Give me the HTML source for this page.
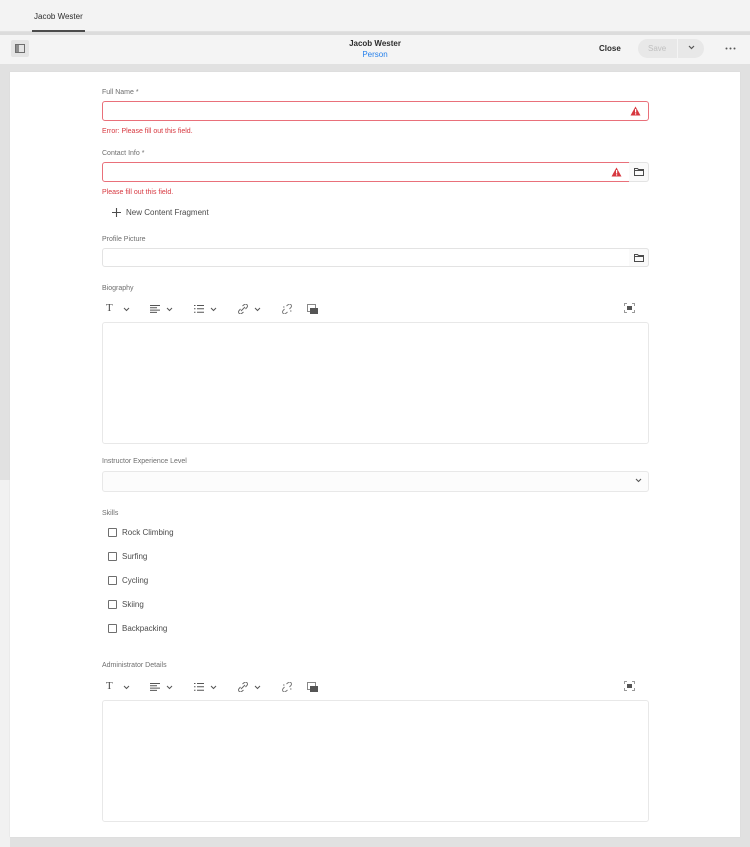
<!DOCTYPE html>
<html><head><meta charset="utf-8"><style>
*{margin:0;padding:0;box-sizing:border-box}
body{width:750px;height:847px;overflow:hidden;background:#e1e1e1;font-family:"Liberation Sans",sans-serif;position:relative;color:#4b4b4b}
.a{position:absolute}
.lbl{position:absolute;left:102px;font-size:7px;color:#6e6e6e}
.inp{position:absolute;left:102px;width:547px;height:20px;border:1px solid #e3e3e3;border-radius:3px;background:#fff}
.err{border-color:#e9707a}
.etxt{position:absolute;left:102px;font-size:7px;color:#d7373f}
.fold{position:absolute;left:629px;width:20px;height:20px;border:1px solid #e3e3e3;border-left:none;border-radius:0 3px 3px 0;background:#fafafa}
.cb{position:absolute;left:108px;width:9px;height:9px;border:1px solid #6e6e6e;border-radius:1px}
.ct{position:absolute;left:122px;font-size:8px;color:#4b4b4b}
.box{position:absolute;left:102px;width:547px;height:122px;border:1px solid #e8e8e8;border-radius:3px;background:#fff}
</style></head><body>
<div class="a" style="left:0;top:0;width:750px;height:31px;background:#f3f3f3"></div>
<div class="a" style="left:34px;top:12px;font-size:8px;color:#2c2c2c">Jacob Wester</div>
<div class="a" style="left:32px;top:30px;width:53px;height:2px;background:#4b4b4b"></div>
<div class="a" style="left:0;top:32px;width:750px;height:3px;background:#dcdcdc"></div>
<div class="a" style="left:0;top:35px;width:750px;height:29px;background:#f4f4f4"></div>
<div class="a" style="left:11px;top:40px;width:18px;height:17px;background:#e4e4e4;border-radius:2px"></div>
<svg class="a" style="left:15px;top:44px" width="10" height="9"><rect x=".5" y=".5" width="9" height="8" fill="none" stroke="#6e6e6e"/><rect x="1" y="1" width="3" height="7" fill="#8e8e8e"/></svg>
<div class="a" style="left:0;top:39px;width:750px;text-align:center;font-size:8px;font-weight:bold;color:#2c2c2c">Jacob Wester</div>
<div class="a" style="left:0;top:50px;width:750px;text-align:center;font-size:8px;color:#2680eb">Person</div>
<div class="a" style="left:599px;top:44px;font-size:8px;color:#2c2c2c;font-weight:bold">Close</div>
<div class="a" style="left:638px;top:39px;width:66px;height:19px;background:#e8e8e8;border-radius:10px"></div>
<div class="a" style="left:677px;top:39px;width:1px;height:19px;background:#f4f4f4"></div>
<div class="a" style="left:648px;top:44px;font-size:8px;color:#c0c0c0">Save</div>
<svg class="a" style="left:688px;top:45px" width="7" height="5"><path d="M1 1l2.5 2.5L6 1" fill="none" stroke="#555" stroke-width="1.2"/></svg>
<svg class="a" style="left:725px;top:47px" width="12" height="3"><circle cx="1.5" cy="1.5" r="1" fill="#555"/><circle cx="5.5" cy="1.5" r="1" fill="#555"/><circle cx="9.5" cy="1.5" r="1" fill="#555"/></svg>
<div class="a" style="left:0;top:480px;width:10px;height:367px;background:#f1f1f1"></div>
<div class="a" style="left:10px;top:72px;width:730px;height:765px;background:#fff;box-shadow:0 0 1px #cfcfcf"></div>

<div class="lbl" style="top:89px">Full Name *</div>
<div class="inp err" style="top:101px"></div>
<svg class="a" style="left:630px;top:106px" width="11" height="10"><path d="M5.5 0.5L10.5 9.5H0.5Z" fill="#d7373f"/><rect x="5" y="3" width="1.2" height="3.5" fill="#fff"/><rect x="5" y="7.3" width="1.2" height="1.2" fill="#fff"/></svg>
<div class="etxt" style="top:128px">Error: Please fill out this field.</div>

<div class="lbl" style="top:150px">Contact Info *</div>
<div class="inp err" style="top:162px;width:528px;border-radius:3px 0 0 3px"></div>
<svg class="a" style="left:611px;top:167px" width="11" height="10"><path d="M5.5 0.5L10.5 9.5H0.5Z" fill="#d7373f"/><rect x="5" y="3" width="1.2" height="3.5" fill="#fff"/><rect x="5" y="7.3" width="1.2" height="1.2" fill="#fff"/></svg>
<div class="fold" style="top:162px"></div>
<svg class="a" style="left:634px;top:168px" width="10" height="8"><path d="M.5 .5h3l1 1h5v6H.5z" fill="none" stroke="#4b4b4b"/><path d="M.5 2.5h9" stroke="#4b4b4b"/></svg>
<div class="etxt" style="top:189px">Please fill out this field.</div>
<svg class="a" style="left:112px;top:208px" width="9" height="9"><path d="M4.5 0v9M0 4.5h9" stroke="#4b4b4b" stroke-width="1.1"/></svg>
<div class="a" style="left:126px;top:208px;font-size:8px;color:#4b4b4b">New Content Fragment</div>

<div class="lbl" style="top:236px">Profile Picture</div>
<div class="inp" style="top:248px;height:19px"></div>
<div class="fold" style="top:248px;height:19px"></div>
<svg class="a" style="left:634px;top:254px" width="10" height="8"><path d="M.5 .5h3l1 1h5v6H.5z" fill="none" stroke="#4b4b4b"/><path d="M.5 2.5h9" stroke="#4b4b4b"/></svg>

<div class="lbl" style="top:285px">Biography</div>
<div class="a tb" style="left:0;top:302px;width:750px;height:14px">
<div class="a" style="left:106px;top:0;font-size:11px;font-family:'Liberation Serif',serif;color:#4b4b4b">T</div>
<svg class="a" style="left:123px;top:5px" width="7" height="5"><path d="M1 1l2.5 2.5L6 1" fill="none" stroke="#555"/></svg>
<svg class="a" style="left:150px;top:3px" width="10" height="8"><path d="M0 .5h10M0 2.8h7M0 5.1h10M0 7.4h7" stroke="#555"/></svg>
<svg class="a" style="left:166px;top:5px" width="7" height="5"><path d="M1 1l2.5 2.5L6 1" fill="none" stroke="#555"/></svg>
<svg class="a" style="left:194px;top:3px" width="10" height="8"><path d="M0 .5h1.5M3 .5h7M0 3.8h1.5M3 3.8h7M0 7.2h1.5M3 7.2h7" stroke="#555"/></svg>
<svg class="a" style="left:210px;top:5px" width="7" height="5"><path d="M1 1l2.5 2.5L6 1" fill="none" stroke="#555"/></svg>
<svg class="a" style="left:238px;top:2px" width="10" height="10"><path d="M3 7L7 3M4.5 2l1.5-1.2a1.8 1.8 0 0 1 3 2.5L7.5 5M5.5 8L4 9.2a1.8 1.8 0 0 1-3-2.5L2.5 5" fill="none" stroke="#666"/></svg>
<svg class="a" style="left:254px;top:5px" width="7" height="5"><path d="M1 1l2.5 2.5L6 1" fill="none" stroke="#555"/></svg>
<svg class="a" style="left:282px;top:2px" width="10" height="10"><path d="M4.5 2l1.5-1.2a1.8 1.8 0 0 1 3 2.5L7.5 5M5.5 8L4 9.2a1.8 1.8 0 0 1-3-2.5L2.5 5M1 3h1.5M8 7h1.5" fill="none" stroke="#777"/></svg>
<svg class="a" style="left:307px;top:2px" width="11" height="10"><rect x=".5" y=".5" width="8" height="7" fill="none" stroke="#888"/><rect x="3" y="4" width="8" height="6" fill="#555"/></svg>
<svg class="a" style="left:624px;top:1px" width="11" height="10"><path d="M.5 3V.5H3M8 .5h2.5V3M10.5 7v2.5H8M3 9.5H.5V7" fill="none" stroke="#999"/><rect x="3" y="3" width="5" height="4" fill="#555"/></svg>
</div>
<div class="box" style="top:322px"></div>

<div class="lbl" style="top:458px">Instructor Experience Level</div>
<div class="inp" style="top:471px;height:21px;background:#fcfcfc;border-color:#e8e8e8"></div>
<svg class="a" style="left:635px;top:478px" width="7" height="5"><path d="M1 1l2.5 2.5L6 1" fill="none" stroke="#555" stroke-width="1.1"/></svg>

<div class="lbl" style="top:510px">Skills</div>
<div class="cb" style="top:528px"></div><div class="ct" style="top:528px">Rock Climbing</div>
<div class="cb" style="top:552px"></div><div class="ct" style="top:552px">Surfing</div>
<div class="cb" style="top:576px"></div><div class="ct" style="top:576px">Cycling</div>
<div class="cb" style="top:600px"></div><div class="ct" style="top:600px">Skiing</div>
<div class="cb" style="top:624px"></div><div class="ct" style="top:624px">Backpacking</div>

<div class="lbl" style="top:662px">Administrator Details</div>
<div class="a tb" style="left:0;top:680px;width:750px;height:14px">
<div class="a" style="left:106px;top:0;font-size:11px;font-family:'Liberation Serif',serif;color:#4b4b4b">T</div>
<svg class="a" style="left:123px;top:5px" width="7" height="5"><path d="M1 1l2.5 2.5L6 1" fill="none" stroke="#555"/></svg>
<svg class="a" style="left:150px;top:3px" width="10" height="8"><path d="M0 .5h10M0 2.8h7M0 5.1h10M0 7.4h7" stroke="#555"/></svg>
<svg class="a" style="left:166px;top:5px" width="7" height="5"><path d="M1 1l2.5 2.5L6 1" fill="none" stroke="#555"/></svg>
<svg class="a" style="left:194px;top:3px" width="10" height="8"><path d="M0 .5h1.5M3 .5h7M0 3.8h1.5M3 3.8h7M0 7.2h1.5M3 7.2h7" stroke="#555"/></svg>
<svg class="a" style="left:210px;top:5px" width="7" height="5"><path d="M1 1l2.5 2.5L6 1" fill="none" stroke="#555"/></svg>
<svg class="a" style="left:238px;top:2px" width="10" height="10"><path d="M3 7L7 3M4.5 2l1.5-1.2a1.8 1.8 0 0 1 3 2.5L7.5 5M5.5 8L4 9.2a1.8 1.8 0 0 1-3-2.5L2.5 5" fill="none" stroke="#666"/></svg>
<svg class="a" style="left:254px;top:5px" width="7" height="5"><path d="M1 1l2.5 2.5L6 1" fill="none" stroke="#555"/></svg>
<svg class="a" style="left:282px;top:2px" width="10" height="10"><path d="M4.5 2l1.5-1.2a1.8 1.8 0 0 1 3 2.5L7.5 5M5.5 8L4 9.2a1.8 1.8 0 0 1-3-2.5L2.5 5M1 3h1.5M8 7h1.5" fill="none" stroke="#777"/></svg>
<svg class="a" style="left:307px;top:2px" width="11" height="10"><rect x=".5" y=".5" width="8" height="7" fill="none" stroke="#888"/><rect x="3" y="4" width="8" height="6" fill="#555"/></svg>
<svg class="a" style="left:624px;top:1px" width="11" height="10"><path d="M.5 3V.5H3M8 .5h2.5V3M10.5 7v2.5H8M3 9.5H.5V7" fill="none" stroke="#999"/><rect x="3" y="3" width="5" height="4" fill="#555"/></svg>
</div>
<div class="box" style="top:700px"></div>
</body></html>
